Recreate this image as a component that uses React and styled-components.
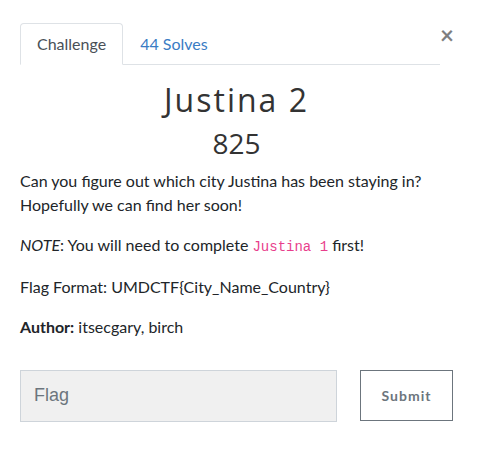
import styled, { createGlobalStyle } from 'styled-components'

const GlobalStyle = createGlobalStyle`
  body {
    margin: 0;
    background: #fff;
    font-family: Lato, 'Liberation Sans', sans-serif;
    color: #212529;
  }
`

const Modal = styled.div`
  width: 433px;
  padding: 23px 31px 0 20px;
`

const TopBar = styled.div`
  display: flex;
  align-items: flex-start;
`

const Tabs = styled.ul`
  flex: 1;
  display: flex;
  list-style: none;
  margin: 0;
  padding: 0;
  border-bottom: 1px solid #dee2e6;
`

const Tab = styled.li`
  margin-bottom: -1px;
  padding: 8px 16px;
  font-size: 16px;
  line-height: 24px;
  border: 1px solid ${(p) => (p.active ? '#dee2e6' : 'transparent')};
  border-bottom-color: ${(p) => (p.active ? '#fff' : 'transparent')};
  border-radius: 4px 4px 0 0;
  background: ${(p) => (p.active ? '#fff' : 'transparent')};
  color: ${(p) => (p.active ? '#495057' : '#3a7cc4')};
  cursor: pointer;
`

const Close = styled.button`
  border: 0;
  background: none;
  padding: 0;
  margin: 0;
  width: 13px;
  font-family: Lato, sans-serif;
  font-size: 24px;
  font-weight: 700;
  line-height: 1;
  color: #000;
  opacity: 0.5;
  text-align: right;
  cursor: pointer;
`

const Name = styled.h2`
  margin: 0 0 8px;
  padding-top: 16px;
  text-align: center;
  font-family: 'Open Sans', sans-serif;
  font-weight: 400;
  font-size: 32px;
  line-height: 1.2;
  letter-spacing: 2px;
  color: #333;
`

const Value = styled.h3`
  margin: 0 0 8px;
  text-align: center;
  font-family: 'Open Sans', sans-serif;
  font-weight: 400;
  font-size: 28px;
  line-height: 1.2;
  color: #333;
`

const Text = styled.p`
  margin: 0 0 16px;
  font-size: 16px;
  line-height: 24px;
`

const Code = styled.code`
  font-family: 'Liberation Mono', monospace;
  font-size: 14px;
  color: #e83e8c;
`

const Form = styled.form`
  display: grid;
  grid-template-columns: 1fr 93px;
  gap: 23px;
  margin-top: 31px;
`

const FlagInput = styled.input`
  box-sizing: border-box;
  height: 52px;
  padding: 0 13px;
  border: 1px solid #ced4da;
  background: #f0f0f0;
  font-family: 'Liberation Sans', Arial, sans-serif;
  font-size: 18px;
  color: #495057;
  outline: none;

  &::placeholder {
    color: #6c757d;
  }
`

const SubmitButton = styled.button`
  box-sizing: border-box;
  height: 51px;
  border: 1px solid #6c757d;
  background: #fff;
  color: #6c757d;
  font-family: Lato, sans-serif;
  font-weight: 700;
  font-size: 14px;
  letter-spacing: 1px;
  cursor: pointer;
`

export default function App() {
  return (
    <>
      <GlobalStyle />
      <Modal>
        <TopBar>
          <Tabs>
            <Tab active>Challenge</Tab>
            <Tab>44 Solves</Tab>
          </Tabs>
          <Close aria-label='Close'>×</Close>
        </TopBar>
        <Name>Justina 2</Name>
        <Value>825</Value>
        <Text>
          Can you figure out which city Justina has been staying in? Hopefully
          we can find her soon!
        </Text>
        <Text>
          <em>NOTE</em>: You will need to complete <Code>Justina 1</Code> first!
        </Text>
        <Text>Flag Format: UMDCTF{'{'}City_Name_Country{'}'}</Text>
        <Text>
          <strong>Author:</strong> itsecgary, birch
        </Text>
        <Form onSubmit={(e) => e.preventDefault()}>
          <FlagInput placeholder='Flag' />
          <SubmitButton type='submit'>Submit</SubmitButton>
        </Form>
      </Modal>
    </>
  )
}
